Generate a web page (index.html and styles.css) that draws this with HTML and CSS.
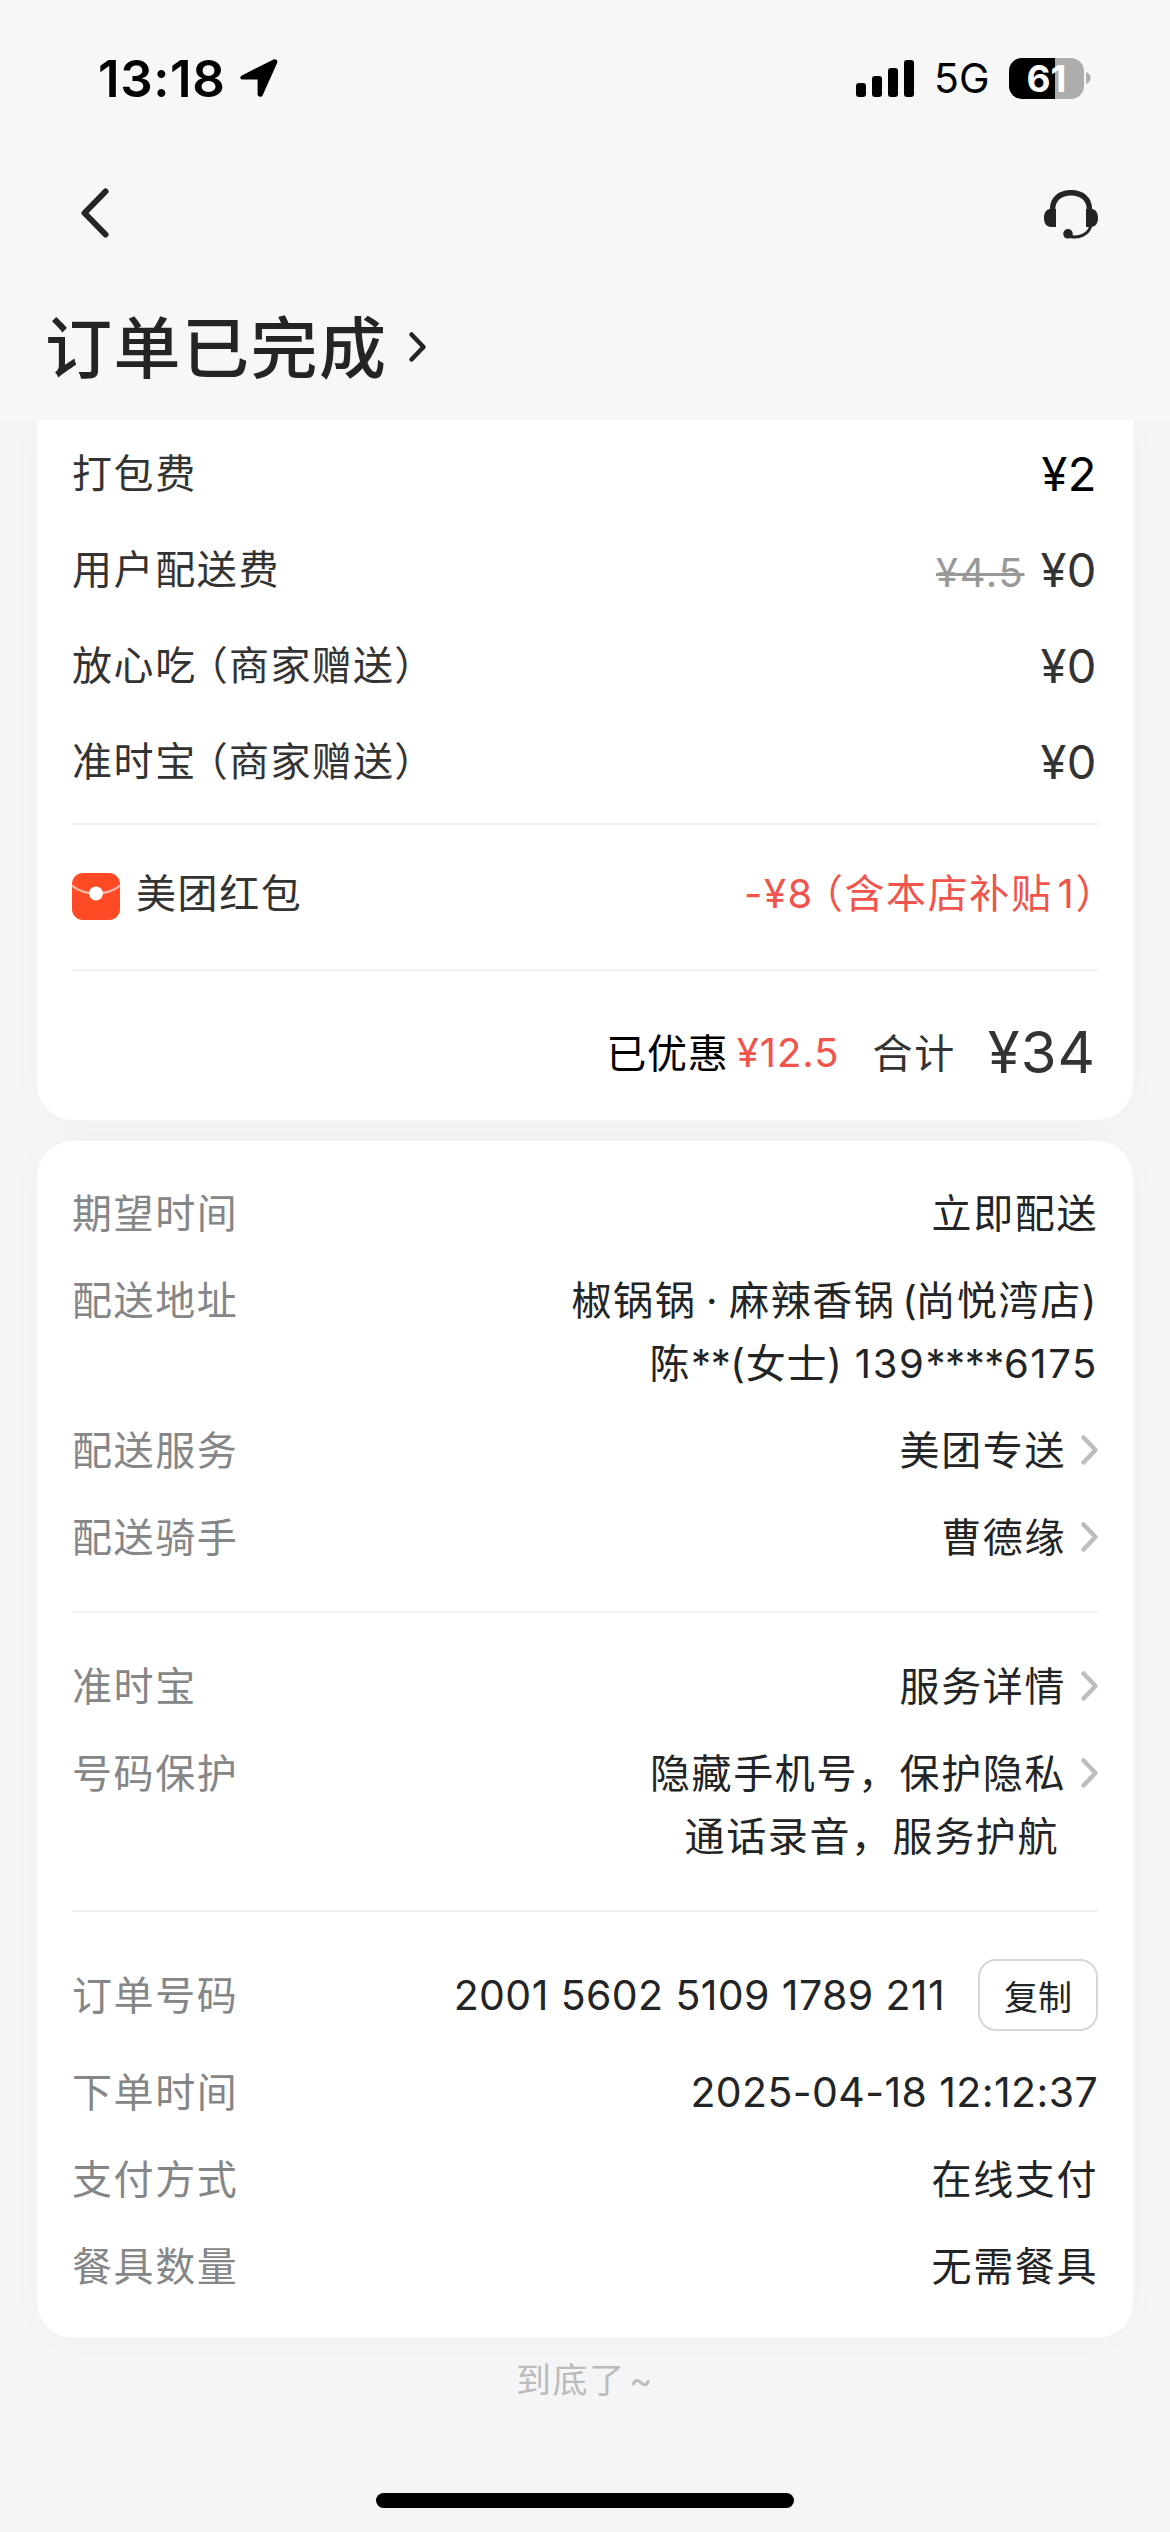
FILE: index.html
```html
<!DOCTYPE html>
<html lang="zh-CN">
<head>
<meta charset="utf-8">
<title>订单已完成</title>
<link rel="stylesheet" href="styles.css">
</head>
<body>
<header class="header">
  <div class="status">
    <div class="status-left">
      <span class="time">13:18</span>
      <svg class="locate" width="40" height="40" viewBox="0 0 40 40"><path d="M3.4 17.2 34.5 1.5c2.500-1.100 4.600.900 3.600 3.500L23.800 37c-1.200 2.800-5.200 2.400-5.200-.900V21.600H4.300c-3.600 0-4.200-2.900-.9-4.400z"/></svg>
    </div>
    <div class="status-right">
      <svg class="signal" width="58" height="37" viewBox="0 0 58 37"><rect x="0" y="23" width="10" height="14" rx="3"/><rect x="16" y="16" width="10" height="21" rx="3"/><rect x="32" y="8" width="10" height="29" rx="3"/><rect x="48" y="0" width="10" height="37" rx="3"/></svg>
      <span class="network">5G</span>
      <div class="battery"><span class="battery-level">61</span></div>
      <svg class="battery-cap" width="5" height="12" viewBox="0 0 5 12"><path d="M0 0c6 2 6 10 0 12z"/></svg>
    </div>
  </div>
  <nav class="nav">
    <svg width="30" height="52" viewBox="0 0 30 52"><path class="ink-line back" d="M25.500 4.500 4.500 26l21 21.500"/></svg>
    <svg class="service" width="54" height="50" viewBox="0 0 54 50"><path class="ink-line band" d="M8.500 20C8.500 8 17 2.700 27 2.700S45.500 8 45.500 20"/><path class="ink-line mic" d="M47 35c-2 9-11 13.500-21 11.500"/><path class="ink" d="M6 19h6v18H7c-4.500 0-7-3.500-7-9s2.500-9 6-9zM48 19h-6v18h5c4.500 0 7-3.500 7-9s-2.500-9-6-9z"/><circle class="ink" cx="24" cy="43.800" r="4.800"/></svg>
  </nav>
  <h1 class="title">订单已完成<svg width="19" height="32" viewBox="0 0 19 32"><path class="ink-line more" d="m3.500 3.500 12 12.500-12 12.500"/></svg></h1>
</header>
<main class="content">
  <section class="card bill">
    <div class="fee"><span class="fee-name">打包费</span><span class="price strong">¥2</span></div>
    <div class="fee"><span class="fee-name">用户配送费</span><span class="price"><s class="was">¥4.5</s>¥0</span></div>
    <div class="fee"><span class="fee-name">放心吃<span class="gift">（商家赠送）</span></span><span class="price">¥0</span></div>
    <div class="fee"><span class="fee-name">准时宝<span class="gift">（商家赠送）</span></span><span class="price">¥0</span></div>
    <div class="coupon">
      <svg class="packet" width="48" height="48" viewBox="0 0 48 48"><rect width="48" height="47" rx="11" fill="#ff4a26"/><path d="M0 12.500C12 23 36 23 48 12.500" fill="none" stroke="#ffb9a8" stroke-width="2.200"/><circle cx="24" cy="20.500" r="7" fill="#fff"/></svg>
      <span>美团红包</span>
      <span class="discount"><span class="num">-¥8</span><span class="subsidy">（含本店补贴<span class="one">1</span>）</span></span>
    </div>
    <div class="total"><span class="saved">已优惠</span><span class="saved-sum">¥12.5</span><span class="sum-label">合计</span><span class="sum">¥34</span></div>
  </section>
  <section class="card detail">
    <div class="group">
      <div class="row"><span class="label">期望时间</span><span class="value">立即配送</span></div>
      <div class="row"><span class="label">配送地址</span><span class="value"><span class="shop">椒锅锅 · 麻辣香锅 <span class="branch">(</span>尚悦湾店)</span><br><span class="contact">陈<span class="mask">**</span><span class="gender">(女士) </span>139<span class="mask">****</span>6175</span></span></div>
      <div class="row"><span class="label">配送服务</span><span class="value">美团专送</span><svg class="chev" width="18" height="32" viewBox="0 0 18 32"><path d="m3.500 3.500 12 12.500-12 12.500"/></svg></div>
      <div class="row"><span class="label">配送骑手</span><span class="value">曹德缘</span><svg class="chev" width="18" height="32" viewBox="0 0 18 32"><path d="m3.500 3.500 12 12.500-12 12.500"/></svg></div>
    </div>
    <div class="group">
      <div class="row"><span class="label">准时宝</span><span class="value">服务详情</span><svg class="chev" width="18" height="32" viewBox="0 0 18 32"><path d="m3.500 3.500 12 12.500-12 12.500"/></svg></div>
      <div class="row"><span class="label">号码保护</span><span class="value">隐藏手机号，保护隐私<br><span class="second">通话录音，服务护航</span></span><svg class="chev" width="18" height="32" viewBox="0 0 18 32"><path d="m3.500 3.500 12 12.500-12 12.500"/></svg></div>
    </div>
    <div class="group last">
      <div class="row order"><span class="label">订单号码</span><span class="value number">2001 5602 5109 1789 211</span><button class="copy">复制</button></div>
      <div class="row"><span class="label">下单时间</span><span class="value number">2025-04-18 12:12:37</span></div>
      <div class="row"><span class="label">支付方式</span><span class="value">在线支付</span></div>
      <div class="row"><span class="label">餐具数量</span><span class="value">无需餐具</span></div>
    </div>
  </section>
  <p class="end">到底了 ~</p>
</main>
<div class="home-bar"></div>
</body>
</html>
```
FILE: styles.css
```css
* { box-sizing: border-box; }
body {
  margin: 0;
  width: 1170px;
  height: 2532px;
  overflow: hidden;
  display: flex;
  flex-direction: column;
  background: #f5f5f7;
  color: #222426;
  font-family: Inter, "Noto Sans CJK SC", sans-serif;
  font-size: 40px;
  letter-spacing: 1.6px;
}
svg { display: block; flex: none; }

.header { height: 420px; flex: none; background: #f7f7f7; }
.status {
  height: 156px;
  padding: 0 79px 0 98px;
  display: flex;
  justify-content: space-between;
  align-items: center;
  color: #000;
  letter-spacing: 0;
}
.status-left, .status-right { display: flex; align-items: center; }
.time { font-size: 51px; font-weight: 600; letter-spacing: .6px; }
.locate { margin-left: 13px; }
.network { margin-left: 20px; width: 75px; font-size: 41px; }
.battery {
  width: 75px;
  height: 41px;
  border-radius: 13px;
  background: linear-gradient(90deg, #000 46px, #adadad 46px);
  color: #fff;
  font-size: 37px;
  font-weight: 700;
  line-height: 41px;
  text-align: center;
}
.battery-cap { margin-left: 2px; fill: #adadad; }
.nav {
  height: 114px;
  padding: 0 72px 0 80px;
  display: flex;
  justify-content: space-between;
  align-items: center;
}
.service { margin-top: 4px; }
.ink { fill: #222426; }
.ink-line { fill: none; stroke: #222426; stroke-linecap: round; stroke-linejoin: round; }
.back { stroke-width: 6; }
.band { stroke-width: 5.5; }
.mic { stroke-width: 3; }
.more { stroke-width: 4.5; }
.title {
  margin: 0;
  padding: 0 0 9px 45px;
  height: 156px;
  display: flex;
  align-items: center;
  font-size: 67px;
  font-weight: 500;
  letter-spacing: 1.5px;
}
.title svg { margin: 6px 0 0 20px; }

.content { display: flex; flex-direction: column; overflow: hidden; flex: 1; padding: 0 37px; }
.card { background: #fff; padding: 0 35px; box-shadow: 0 0 36px rgba(20, 20, 50, .025); }
.bill { height: 700px; padding-top: 5px; border-radius: 0 0 36px 36px; color: #333; }
.fee { height: 96px; display: flex; align-items: center; justify-content: space-between; }
.fee-name { padding-bottom: 4px; }
.gift { margin-left: 11px; letter-spacing: 1.3px; font-feature-settings: "halt"; }
.price { font-size: 47px; letter-spacing: .5px; padding-right: 1px; }
.strong { color: #000; }
.was { color: #999; font-size: 40px; letter-spacing: 1.7px; margin-right: 16px; text-decoration-thickness: 3px; }
.coupon {
  margin-top: 14px;
  height: 148px;
  display: flex;
  align-items: center;
  border: solid #f0f0f0;
  border-width: 2px 0;
  padding-bottom: 12px;
}
.packet { margin: 12px 16px 0 0; }
.discount { margin-left: auto; padding-right: 1px; color: #f0544c; }
.subsidy { margin-left: 9px; font-feature-settings: "halt"; }
.one { margin-left: 5px; }
.total { height: 149px; padding: 13px 2px 0 0; display: flex; align-items: center; justify-content: flex-end; }
.saved { padding-bottom: 3px; color: #000; letter-spacing: .8px; }
.saved-sum { margin-left: 8px; color: #f0544c; letter-spacing: 1px; }
.sum-label { margin-left: 33px; padding-bottom: 3px; }
.sum { margin-left: 32px; font-size: 58px; letter-spacing: 1px; }

.detail { margin-top: 21px; height: 1197px; padding-top: 41px; border-radius: 36px; }
.group { display: flex; flex-direction: column; gap: 24px; padding-bottom: 42px; margin-bottom: 42px; border-bottom: 2px solid #f0f0f0; }
.last { margin: 0; padding: 5px 0 0; border: 0; }
.row { display: flex; line-height: 63px; }
.label { color: #858687; }
.value { margin-left: auto; text-align: right; }
.shop { word-spacing: -3px; }
.branch { margin-left: -3px; letter-spacing: -1.5px; }
.mask { letter-spacing: -.4px; }
.gender { letter-spacing: .8px; }
.second { margin-right: 7px; }
.chev { margin: 15px 0 0 14px; fill: none; stroke: #bdbdbd; stroke-width: 4.5; stroke-linecap: round; stroke-linejoin: round; }
.order { align-items: center; margin-bottom: 6px; }
.number { font-size: 41px; letter-spacing: .4px; }
.copy {
  width: 120px;
  height: 72px;
  margin-left: 33px;
  padding: 0;
  border: 2px solid #d6d6d6;
  border-radius: 18px;
  background: #fff;
  color: #222426;
  font: 34px Inter, "Noto Sans CJK SC", sans-serif;
}
.end { margin: 12px 0 0; line-height: 60px; text-align: center; font-size: 35px; color: #bbb; word-spacing: -8px; }
.home-bar { flex: none; width: 418px; height: 15px; margin: 0 auto 24px; border-radius: 8px; background: #000; }
```
